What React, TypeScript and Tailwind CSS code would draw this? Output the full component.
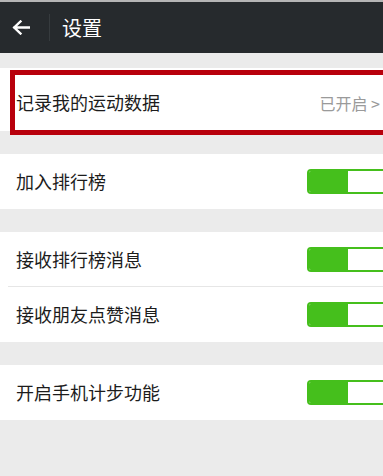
import React from "react";

function Toggle() {
  return (
    <div className="shrink-0 mr-[-6px] w-[82px] h-[25px] rounded-[4px] border-2 border-[#45bf1c] bg-white flex overflow-hidden">
      <div className="w-[39px] h-full bg-[#45bf1c]" />
    </div>
  );
}

function Row({ label, divider }: { label: string; divider?: boolean }) {
  return (
    <div className="relative h-[55px] bg-white flex items-center pl-[16px]">
      <span className="flex-1 text-[18px] text-[#1c1c1c]">{label}</span>
      <Toggle />
      {divider && <div className="absolute left-[8px] right-0 bottom-0 h-px bg-[#e6e6e6]" />}
    </div>
  );
}

export default function App() {
  return (
    <div
      className="w-full h-[476px] bg-[#ebebeb] overflow-hidden"
      style={{ fontFamily: '"Noto Sans CJK SC", "Noto Sans", sans-serif' }}
    >
      <div className="h-[2px] bg-[#b5b5b5]" />
      <div className="h-[51px] bg-[#262a2d] flex items-center">
        <svg className="ml-[12px]" width="18" height="15" viewBox="0 0 18 15" fill="none">
          <path d="M17 7.5H2.5M8.5 1.5L2.2 7.5l6.3 6" stroke="#ffffff" strokeWidth="2.4" strokeLinecap="square" />
        </svg>
        <div className="ml-[19px] w-px h-[27px] bg-[#363b3e]" />
        <span className="ml-[12px] text-[20px] text-white leading-none">设置</span>
      </div>
      <div className="h-[15px]" />
      <div className="relative h-[63px] bg-white flex items-center pl-[16px] pt-[6px]">
        <span className="flex-1 text-[18px] text-[#1c1c1c]">记录我的运动数据</span>
        <span className="text-[16px] text-[#9a9a9a] mr-[3px]">已开启 &gt;</span>
        <div className="absolute left-[10px] top-[2px] right-[-10px] h-[65px] border-[5px] border-[#b8000c]" />
      </div>
      <div className="h-[23px]" />
      <Row label="加入排行榜" />
      <div className="h-[23px]" />
      <Row label="接收排行榜消息" divider />
      <Row label="接收朋友点赞消息" />
      <div className="h-[23px]" />
      <Row label="开启手机计步功能" />
    </div>
  );
}
